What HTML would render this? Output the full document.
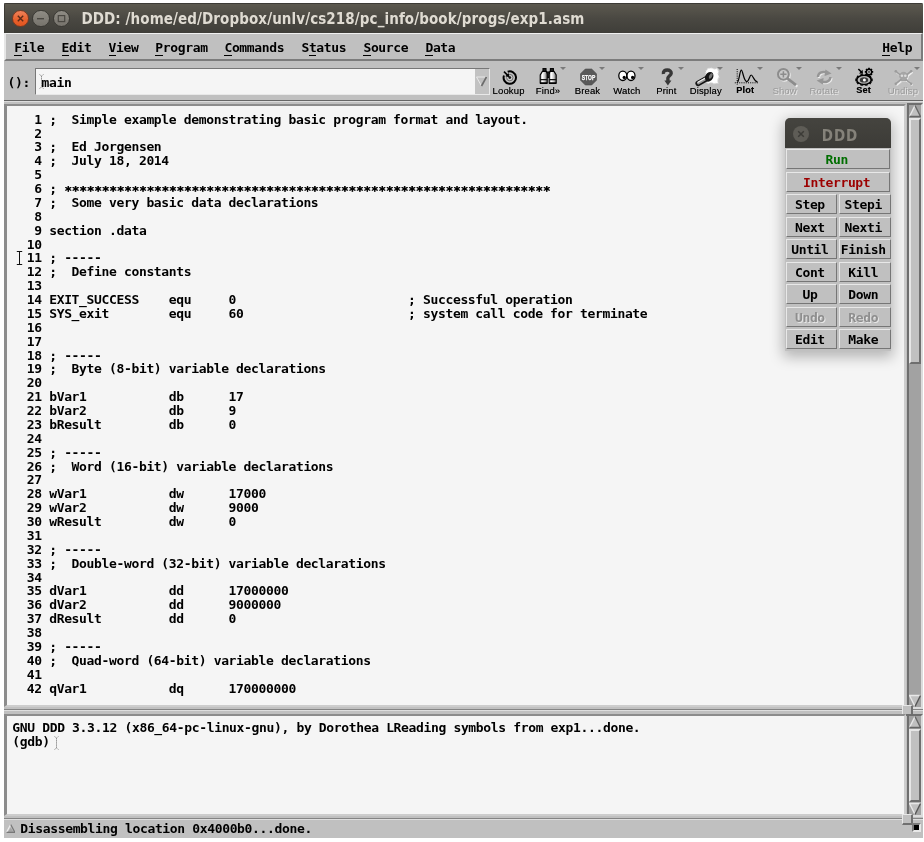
<!DOCTYPE html>
<html>
<head>
<meta charset="utf-8">
<title>DDD: /home/ed/Dropbox/unlv/cs218/pc_info/book/progs/exp1.asm</title>
<style>
html,body{margin:0;padding:0;background:#fff;}
body{width:924px;height:842px;position:relative;overflow:hidden;}
*{box-sizing:border-box;}
.abs{position:absolute;}
.mono{font-family:"DejaVu Sans Mono","Liberation Mono",monospace;font-weight:bold;font-size:13px;letter-spacing:-0.35px;color:#000;white-space:pre;line-height:13.875px;}
#win{left:4px;top:3px;width:919px;height:835px;background:#c0c0c0;will-change:transform;}
/* title bar */
#title{left:0;top:0;width:919px;height:29.6px;border-radius:1.5px 1.5px 0 0;background:linear-gradient(#5c594f 0%,#4a4842 50%,#3f3e39 100%);border-top:1px solid #3d3b36;border-left:1px solid #3d3b36;}
#title .t{left:76.4px;top:4.6px;font-family:"DejaVu Sans Condensed","Liberation Sans",sans-serif;font-weight:bold;font-size:15px;line-height:20px;color:#dfdbd2;white-space:pre;letter-spacing:0.09px;}
.wb{width:17.6px;height:17.6px;border-radius:50%;top:5.6px;border:1px solid #3a3934;}
/* menu */
#menu{left:0;top:30px;width:919px;height:28px;background:#c0c0c0;border-top:1px solid #f0f0f0;border-left:2px solid #e6e6e6;border-bottom:2px solid #7c7c7c;border-right:2px solid #7c7c7c;}
#menu span{position:absolute;top:6.5px;}
#menu u{text-decoration:none;border-bottom:1.5px solid #000;}
/* toolbar */
#tool{left:0;top:58px;width:919px;height:40px;background:#c0c0c0;border-bottom:1px solid #666;}
#arg{left:31px;top:7px;width:454.6px;height:27px;background:#f5f5f5;border-top:1px solid #777;border-left:1px solid #777;border-bottom:1px solid #e8e8e8;border-right:1px solid #e8e8e8;}
.tb{position:absolute;top:0;width:40px;height:40px;text-align:center;}
.tb .lb{position:absolute;left:-10px;width:60px;top:23.5px;text-align:center;font-family:"Liberation Sans","DejaVu Sans",sans-serif;font-size:9.5px;line-height:11px;color:#000;letter-spacing:0.15px;text-shadow:0 0 0.6px rgba(0,0,0,0.55);}
.tb.dis .lb{color:#9a9a9a;text-shadow:1px 1px 0 #e8e8e8;}
.tb svg{position:absolute;left:6px;top:4px;}
.tb .dd{position:absolute;right:2.5px;top:6px;width:0;height:0;border-left:3.2px solid transparent;border-right:3.2px solid transparent;border-top:3.4px solid #7a7a7a;}
/* source */
#src{left:0;top:99px;width:902px;height:610px;background:#c0c0c0;}
#srcin{left:0px;top:1.7px;width:902.4px;height:603.6px;background:#f5f5f5;border-top:2px solid #8c8c8c;border-left:3px solid #8c8c8c;border-bottom:2.3px solid #cdcdcd;border-right:2.3px solid #cdcdcd;}
#code{left:4.8px;top:7.0px;}
/* scrollbars */
.sb{background:#a2a2a2;border-top:2px solid #6e6e6e;border-left:2px solid #6e6e6e;border-bottom:2px solid #dcdcdc;border-right:2px solid #dcdcdc;}
.thumb{background:#c0c0c0;border-top:2px solid #e6e6e6;border-left:2px solid #e6e6e6;border-bottom:2px solid #6e6e6e;border-right:2px solid #6e6e6e;}
/* command tool */
#ct{left:781px;top:115px;width:106.4px;height:232.6px;box-shadow:0 4px 14px 2px rgba(0,0,0,0.27);border-radius:5px 5px 0 0;background:#c0c0c0;}
#ctt{left:0;top:0;width:106px;height:30px;border-radius:5px 5px 0 0;background:linear-gradient(#45443f,#3c3b37);}
#ctt .t{left:36.8px;top:7.5px;font-family:"DejaVu Sans Condensed","Liberation Sans",sans-serif;font-weight:bold;font-size:15px;line-height:20px;color:#85827a;letter-spacing:0.9px;}
.btn{position:absolute;height:20.4px;background:#c0c0c0;border-top:1.5px solid #e8e8e8;border-left:1.5px solid #e8e8e8;border-bottom:1.5px solid #767676;border-right:1.5px solid #767676;text-align:center;}
.btn span{display:block;line-height:19.2px;padding-right:3px;}
.btn.dis span{color:#8e8e8e;text-shadow:1px 1px 0 #e6e6e6;}
/* console */
#con{left:0;top:711.2px;width:902.4px;height:102.1px;background:#f5f5f5;border-top:2.2px solid #8c8c8c;border-left:3px solid #8c8c8c;border-bottom:2px solid #cdcdcd;border-right:2px solid #cdcdcd;}
#context{left:5.3px;top:4.6px;}
.sash{width:11px;height:11px;background:#c0c0c0;border-top:1px solid #e8e8e8;border-left:1px solid #e8e8e8;border-bottom:2px solid #707070;border-right:2px solid #707070;}
.sep{height:2px;border-top:1px solid #858585;border-bottom:1px solid #dedede;}
</style>
</head>
<body>
<div id="win" class="abs">

<!-- TITLE BAR -->
<div id="title" class="abs">
  <div class="abs wb" style="left:6.8px;background:linear-gradient(#f0825a,#e8602c 60%,#e2551f);border-color:#7a3a22;">
    <svg class="abs" style="left:0.3px;top:0.3px" width="15" height="15" viewBox="0 0 15 15"><path d="M4.8 4.8 L10.2 10.2 M10.2 4.8 L4.8 10.2" stroke="#5a2a18" stroke-width="1.4" fill="none"/></svg>
  </div>
  <div class="abs wb" style="left:27.2px;background:linear-gradient(#8f8c84,#76736c);">
    <svg class="abs" style="left:0.3px;top:0.3px" width="15" height="15" viewBox="0 0 15 15"><path d="M4 7.7 L11 7.7" stroke="#4a4842" stroke-width="1.4" fill="none"/></svg>
  </div>
  <div class="abs wb" style="left:47.6px;background:linear-gradient(#8f8c84,#76736c);">
    <svg class="abs" style="left:0.3px;top:0.3px" width="15" height="15" viewBox="0 0 15 15"><rect x="4.3" y="4.6" width="6.4" height="6" stroke="#4a4842" stroke-width="1.2" fill="none"/></svg>
  </div>
  <div class="abs t">DDD: /home/ed/Dropbox/unlv/cs218/pc_info/book/progs/exp1.asm</div>
</div>

<!-- MENU BAR -->
<div id="menu" class="abs mono">
  <span style="left:8.3px"><u>F</u>ile</span>
  <span style="left:55.6px"><u>E</u>dit</span>
  <span style="left:102.6px"><u>V</u>iew</span>
  <span style="left:149.3px"><u>P</u>rogram</span>
  <span style="left:218.4px"><u>C</u>ommands</span>
  <span style="left:295.4px">S<u>t</u>atus</span>
  <span style="left:357.4px"><u>S</u>ource</span>
  <span style="left:419.4px"><u>D</u>ata</span>
  <span style="left:876.2px"><u>H</u>elp</span>
</div>

<!-- TOOLBAR -->
<div id="tool" class="abs">
  <div class="abs mono" style="left:3.6px;top:15.2px;">():</div>
  <div id="arg" class="abs">
    <div class="abs mono" style="left:5.5px;top:6.5px;">main</div>
    <svg class="abs" style="left:3px;top:5px" width="6" height="15" viewBox="0 0 6 15"><path d="M0.5 0.5 L2.5 2 L4.5 0.5 M2.5 2 L2.5 13 M0.5 14.5 L2.5 13 L4.5 14.5" stroke="#8a8a8a" stroke-width="1" fill="none" stroke-dasharray="1.5 0.6"/></svg>
    <div class="abs" style="left:439.4px;top:0;width:13.2px;height:25px;background:#c2c2c2;">
      <svg class="abs" style="left:1px;top:7px" width="11" height="11" viewBox="0 0 11 11"><path d="M0.5 1 L10.5 1 L5.5 10 Z" fill="#c0c0c0" stroke="#e8e8e8" stroke-width="1"/><path d="M10.5 1 L5.5 10" stroke="#6a6a6a" stroke-width="1.7"/></svg>
    </div>
  </div>
  <div id="tbs">
  <div class="tb" style="left:484.6px"><!--I:Lookup--><svg width="28" height="24" viewBox="0 0 28 24" style="overflow:visible"><path d="M12.68 6.77 A6.2 6.2 0 1 1 8.97 10.48" stroke="#000" stroke-width="2" fill="none"/><circle cx="14.8" cy="12.6" r="3.2" fill="#d0d0d0" stroke="#6a6a6a" stroke-width="1"/><circle cx="14.8" cy="12.6" r="1.4" fill="#1a1a1a"/><path d="M9 6.6 L13 10.6" stroke="#000" stroke-width="1.6"/><path d="M14.6 12.2 L10.4 11.2 L13.6 8 Z" fill="#000"/></svg><!--/I:Lookup--><div class="lb">Lookup</div></div>
  <div class="tb" style="left:524.0px"><!--I:Find»--><svg width="28" height="24" viewBox="0 0 28 24" style="overflow:visible"><defs><linearGradient id="bg1" x1="0" x2="1"><stop offset="0" stop-color="#9a9a9a"/><stop offset="0.3" stop-color="#fff"/><stop offset="0.6" stop-color="#d0d0d0"/><stop offset="1" stop-color="#666"/></linearGradient></defs><g stroke="#000" stroke-width="1.1"><rect x="9" y="3.6" width="3" height="3" fill="#222"/><rect x="16.4" y="3.6" width="3" height="3" fill="#222"/><rect x="12.4" y="7" width="3.6" height="5.4" fill="#222"/><path d="M8.4 6.4 L12.4 6.4 L13.2 9 L13.2 18 L6.2 18 L6.2 10 Z" fill="url(#bg1)"/><path d="M16 6.4 L20 6.4 L22.2 10 L22.2 18 L15.2 18 L15.2 9 Z" fill="url(#bg1)"/></g><path d="M6.2 14.6 h7 M15.2 14.6 h7" stroke="#111" stroke-width="1.4"/><path d="M6 18.3 h7.4 M15 18.3 h7.4" stroke="#000" stroke-width="1.5"/></svg><!--/I:Find»--><i class="dd"></i><div class="lb">Find»</div></div>
  <div class="tb" style="left:563.5px"><!--I:Break--><svg width="28" height="24" viewBox="0 0 28 24" style="overflow:visible"><path d="M11.3 4 L17.7 4 L22.5 8.8 L22.5 15.2 L17.7 20 L11.3 20 L6.5 15.2 L6.5 8.8 Z" fill="#595959" stroke="#4c4c4c" stroke-width="0.6"/><text x="14.5" y="14.5" text-anchor="middle" font-family="Liberation Sans, DejaVu Sans, sans-serif" font-weight="bold" font-size="6.8" fill="#fff" stroke="#fff" stroke-width="0.25" textLength="13.4" lengthAdjust="spacingAndGlyphs">STOP</text></svg><!--/I:Break--><i class="dd"></i><div class="lb">Break</div></div>
  <div class="tb" style="left:602.9px"><!--I:Watch--><svg width="28" height="24" viewBox="0 0 28 24" style="overflow:visible"><ellipse cx="9.8" cy="10.8" rx="4" ry="4.7" fill="#fff" stroke="#000" stroke-width="1.3"/><ellipse cx="18" cy="10.8" rx="4" ry="4.7" fill="#fff" stroke="#000" stroke-width="1.3"/><circle cx="11.2" cy="12.4" r="1.6" fill="#000"/><circle cx="19.6" cy="12.4" r="1.6" fill="#000"/></svg><!--/I:Watch--><i class="dd"></i><div class="lb">Watch</div></div>
  <div class="tb" style="left:642.3px"><!--I:Print--><svg width="28" height="24" viewBox="0 0 28 24" style="overflow:visible"><path d="M11.4 9 C11 6 13 5 15.2 5 C17.8 5 19.4 6.4 19.2 8.4 C19 10.4 16.2 11 15.9 13 L15.9 16" stroke="#383838" stroke-width="3.4" fill="none"/><path d="M12.4 15.6 L19.4 15.6 L15.9 20.6 Z" fill="#383838"/></svg><!--/I:Print--><i class="dd"></i><div class="lb">Print</div></div>
  <div class="tb" style="left:681.8px"><!--I:Display--><svg width="28" height="24" viewBox="0 0 28 24" style="overflow:visible"><path d="M14 6 L16 3.4 L20 3 L22 4.2 L25 3.4 L26.6 6 L26 9 L27 12 L25.6 15 L26 18 L22 18.6 L19 17.4 L16 18.4 L13.4 15 Z" fill="#fff"/><path d="M14 6 L16 3.4 L20 3 L22 4.2 L25 3.4 L26.6 6 L26 9 L27 12 L25.6 15 L26 18 L22 18.6 L19 17.4 L16 18.4 L13.4 15 Z" fill="none" stroke="#e0e0e0" stroke-width="1.2" stroke-dasharray="1 1"/><path d="M6.2 18.4 L14.6 13.6" stroke="#151515" stroke-width="5.6" stroke-linecap="round"/><path d="M6.4 18 L14 13.6" stroke="#9a9a9a" stroke-width="2.8" stroke-linecap="round"/><path d="M6 17.2 L13.4 12.9" stroke="#f0f0f0" stroke-width="1.2" stroke-linecap="round"/><ellipse cx="17.2" cy="11.8" rx="3.9" ry="5.2" transform="rotate(30 17.2 11.8)" fill="#151515"/><ellipse cx="18.7" cy="10.9" rx="1.5" ry="3" transform="rotate(30 18.7 10.9)" fill="#777"/></svg><!--/I:Display--><i class="dd"></i><div class="lb">Display</div></div>
  <div class="tb" style="left:721.2px"><!--I:Plot--><svg width="28" height="24" viewBox="0 0 28 24" style="overflow:visible"><path d="M6.2 4 L6.2 20" stroke="#000" stroke-width="1" stroke-dasharray="1 1.2"/><path d="M3.8 17.8 L27 17.8" stroke="#000" stroke-width="1" stroke-dasharray="1 1.2"/><path d="M6.6 17 C8.4 15 8.8 5.2 10.3 5.2 C12 5.2 12.6 17 16 16.6 C18 16.4 18.6 10 20.2 10 C22 10 22.8 16.4 26.6 17" stroke="#000" stroke-width="1.2" fill="none"/></svg><!--/I:Plot--><i class="dd"></i><div class="lb" style="font-weight:bold;font-size:9.2px;top:24.3px">Plot</div></div>
  <div class="tb dis" style="left:760.6px"><!--I:Show--><svg width="28" height="24" viewBox="0 0 28 24" style="overflow:visible"><g transform="translate(1,1)" stroke="#ececec" fill="none"><circle cx="12.4" cy="9.3" r="5.6" stroke-width="1.6"/><path d="M16.6 13.6 L25.4 20.6" stroke-width="2.4"/></g><circle cx="12.4" cy="9.3" r="5.4" stroke="#8c8c8c" stroke-width="2" fill="#cacaca"/><path d="M12.4 6.2 L12.4 12.4 M9.3 9.3 L15.5 9.3" stroke="#8c8c8c" stroke-width="1.5"/><path d="M16.6 13.6 L25 20.2" stroke="#8c8c8c" stroke-width="2.8"/></svg><!--/I:Show--><i class="dd"></i><div class="lb">Show</div></div>
  <div class="tb dis" style="left:800.0px"><!--I:Rotate--><svg width="28" height="24" viewBox="0 0 28 24" style="overflow:visible"><g transform="translate(1,1)" fill="none" stroke="#ececec" stroke-width="2.2"><path d="M8 12 C8 8 12 6 16.5 7.4"/><path d="M20.4 12 C20.4 16 16 18 11.6 16.6"/></g><g fill="none" stroke="#969696" stroke-width="2.4"><path d="M8 12 C8 8 12 6 16.5 7.4"/><path d="M20.4 12 C20.4 16 16 18 11.6 16.6"/></g><path d="M15.4 4.4 L21.6 8.6 L14.6 11 Z" fill="#969696"/><path d="M12.8 19.6 L6.6 15.4 L13.6 13 Z" fill="#969696"/></svg><!--/I:Rotate--><i class="dd"></i><div class="lb">Rotate</div></div>
  <div class="tb" style="left:839.5px"><!--I:Set--><svg width="28" height="24" viewBox="0 0 28 24" style="overflow:visible"><path d="M20.70 14.90 L22.70 14.90 M19.42 17.31 L21.04 18.43 M16.07 18.80 L16.69 20.61 M11.93 18.80 L11.31 20.61 M8.58 17.31 L6.96 18.43 M7.30 14.90 L5.30 14.90 M8.58 12.49 L6.96 11.37 M11.93 11.00 L11.31 9.19 M16.07 11.00 L16.69 9.19 M19.42 12.49 L21.04 11.37 " stroke="#000" stroke-width="2.6"/><ellipse cx="14" cy="14.9" rx="7.2" ry="4.6" fill="#b8b8b8" stroke="#000" stroke-width="1.6"/><ellipse cx="14" cy="14.9" rx="4.2" ry="2.7" fill="#3a3a3a"/><circle cx="14.4" cy="14.9" r="1.5" fill="#fff"/><path d="M21.20 6.90 L23.20 6.90 M20.56 8.46 L21.97 9.80 M19.00 9.10 L19.00 11.00 M17.44 8.46 L16.03 9.80 M16.80 6.90 L14.80 6.90 M17.44 5.34 L16.03 4.00 M19.00 4.70 L19.00 2.80 M20.56 5.34 L21.97 4.00 " stroke="#000" stroke-width="1.7"/><circle cx="19" cy="6.9" r="2.7" fill="#c0c0c0" stroke="#000" stroke-width="1.4"/><circle cx="19" cy="6.9" r="0.9" fill="#333"/><path d="M8.4 4 L11.6 7.2" stroke="#000" stroke-width="1.6"/><path d="M13 8.8 L9 8.4 L12.6 4.8 Z" fill="#000"/></svg><!--/I:Set--><div class="lb" style="font-weight:bold;font-size:9.2px;top:24.3px">Set</div></div>
  <div class="tb dis" style="left:878.9px"><!--I:Undisp--><svg width="28" height="24" viewBox="0 0 28 24" style="overflow:visible"><g transform="translate(1,1)" stroke="#ececec" stroke-width="2" stroke-linecap="round" fill="#ececec"><path d="M7 6.4 L22 18.6 M22 6.4 L7 18.6"/><path d="M10.6 11 C10.6 6 18.6 6 18.6 11 C18.6 13 17.4 13.4 17 14 L17 16 L12.2 16 L12.2 14 C11.8 13.4 10.6 13 10.6 11 Z" stroke="none"/></g><g stroke="#9c9c9c" stroke-width="1.8" stroke-linecap="round"><path d="M7 6.4 L22 18.6 M22 6.4 L7 18.6"/></g><circle cx="6.8" cy="6.2" r="1.3" fill="#9c9c9c"/><circle cx="22.2" cy="6.2" r="1.3" fill="#9c9c9c"/><circle cx="6.8" cy="18.8" r="1.3" fill="#9c9c9c"/><circle cx="22.2" cy="18.8" r="1.3" fill="#9c9c9c"/><path d="M10.6 11 C10.6 6 18.6 6 18.6 11 C18.6 13 17.4 13.4 17 14 L17 16 L12.2 16 L12.2 14 C11.8 13.4 10.6 13 10.6 11 Z" fill="#a6a6a6" stroke="#9a9a9a" stroke-width="0.6"/><circle cx="12.9" cy="10.8" r="1.3" fill="#dcdcdc"/><circle cx="16.3" cy="10.8" r="1.3" fill="#dcdcdc"/></svg><!--/I:Undisp--><i class="dd"></i><div class="lb">Undisp</div></div>
  </div>
</div>
<div class="abs" style="left:0;top:98px;width:919px;height:1px;background:#dcdcdc"></div>

<!-- SOURCE WINDOW -->
<div id="src" class="abs">
  <div id="srcin" class="abs">
<div id="code" class="abs mono">   1 ;  Simple example demonstrating basic program format and layout.
   2 
   3 ;  Ed Jorgensen
   4 ;  July 18, 2014
   5 
   6 ; <span style="position:relative;top:2.3px;text-shadow:0.4px 0 0 #000">*****************************************************************</span>
   7 ;  Some very basic data declarations
   8 
   9 section .data
  10 
  11 ; -----
  12 ;  Define constants
  13 
  14 EXIT_SUCCESS    equ     0                       ; Successful operation
  15 SYS_exit        equ     60                      ; system call code for terminate
  16 
  17 
  18 ; -----
  19 ;  Byte (8-bit) variable declarations
  20 
  21 bVar1           db      17
  22 bVar2           db      9
  23 bResult         db      0
  24 
  25 ; -----
  26 ;  Word (16-bit) variable declarations
  27 
  28 wVar1           dw      17000
  29 wVar2           dw      9000
  30 wResult         dw      0
  31 
  32 ; -----
  33 ;  Double-word (32-bit) variable declarations
  34 
  35 dVar1           dd      17000000
  36 dVar2           dd      9000000
  37 dResult         dd      0
  38 
  39 ; -----
  40 ;  Quad-word (64-bit) variable declarations
  41 
  42 qVar1           dq      170000000</div>
  </div>
</div>

<svg class="abs" style="left:12px;top:248px" width="7" height="14" viewBox="0 0 7 14"><path d="M0.8 0.5 L6.2 0.5 M3.5 0.5 L3.5 13.5 M0.8 13.5 L6.2 13.5" stroke="#111" stroke-width="1" fill="none"/></svg>

<!-- SOURCE SCROLLBAR -->
<div class="abs sb" style="left:903px;top:100px;width:16px;height:606px;">
  <svg class="abs" style="left:0;top:0" width="12" height="13" viewBox="0 0 12 13"><path d="M6 0.5 L11.5 11.5 L0.5 11.5 Z" fill="#c0c0c0"/><path d="M6 0.5 L0.5 11.5" stroke="#e8e8e8" stroke-width="1.4"/><path d="M6 0.5 L11.5 11.5 L0.5 11.5" stroke="#666" stroke-width="1.4" fill="none"/></svg>
  <div class="abs thumb" style="left:0;top:13px;width:12px;height:246px;"></div>
  <svg class="abs" style="left:0;top:589px" width="12" height="13" viewBox="0 0 12 13"><path d="M0.5 1.5 L11.5 1.5 L6 12.5 Z" fill="#c0c0c0"/><path d="M11.5 1.5 L0.5 1.5 L6 12.5" stroke="#e8e8e8" stroke-width="1.4" fill="none"/><path d="M11.5 1.5 L6 12.5" stroke="#555" stroke-width="1.4"/></svg>
</div>

<!-- COMMAND TOOL -->
<div id="ct" class="abs">
  <div id="ctt" class="abs">
    <div class="abs" style="left:8px;top:8px;width:16px;height:16px;border-radius:50%;background:#5e5c56;">
      <svg class="abs" style="left:0;top:0" width="16" height="16" viewBox="0 0 16 16"><path d="M5.2 5.2 L10.8 10.8 M10.8 5.2 L5.2 10.8" stroke="#3c3b37" stroke-width="1.5" fill="none"/></svg>
    </div>
    <div class="abs t">DDD</div>
  </div>
  <div id="btns" class="mono">
    <div class="btn" style="left:0.9px;top:31.1px;width:104.6px;"><span style="color:#006e00">Run</span></div>
    <div class="btn" style="left:0.9px;top:53.6px;width:104.6px;"><span style="color:#9c0000">Interrupt</span></div>
    <div class="btn" style="left:0.9px;top:76.1px;width:51.0px;"><span>Step</span></div>
    <div class="btn" style="left:54.0px;top:76.1px;width:51.5px;"><span>Stepi</span></div>
    <div class="btn" style="left:0.9px;top:98.6px;width:51.0px;"><span>Next</span></div>
    <div class="btn" style="left:54.0px;top:98.6px;width:51.5px;"><span>Nexti</span></div>
    <div class="btn" style="left:0.9px;top:121.1px;width:51.0px;"><span>Until</span></div>
    <div class="btn" style="left:54.0px;top:121.1px;width:51.5px;"><span>Finish</span></div>
    <div class="btn" style="left:0.9px;top:143.6px;width:51.0px;"><span>Cont</span></div>
    <div class="btn" style="left:54.0px;top:143.6px;width:51.5px;"><span>Kill</span></div>
    <div class="btn" style="left:0.9px;top:166.1px;width:51.0px;"><span>Up</span></div>
    <div class="btn" style="left:54.0px;top:166.1px;width:51.5px;"><span>Down</span></div>
    <div class="btn dis" style="left:0.9px;top:188.6px;width:51.0px;"><span>Undo</span></div>
    <div class="btn dis" style="left:54.0px;top:188.6px;width:51.5px;"><span>Redo</span></div>
    <div class="btn" style="left:0.9px;top:211.1px;width:51.0px;"><span>Edit</span></div>
    <div class="btn" style="left:54.0px;top:211.1px;width:51.5px;"><span>Make</span></div>
  </div>
</div>

<!-- SEPARATOR + SASH -->
<div class="abs sep" style="left:0;top:706px;width:919px;"></div>
<div class="abs sash" style="left:898px;top:702px;"></div>

<!-- CONSOLE -->
<div id="con" class="abs">
<div id="context" class="abs mono">GNU DDD 3.3.12 (x86_64-pc-linux-gnu), by Dorothea LReading symbols from exp1...done.
(gdb) </div>
  <svg class="abs" style="left:47px;top:19.5px" width="6" height="15" viewBox="0 0 6 15"><path d="M0.5 0.5 L2.5 2 L4.5 0.5 M2.5 2 L2.5 12 M0.5 13.5 L2.5 12 L4.5 13.5" stroke="#909090" stroke-width="1" fill="none" stroke-dasharray="1.5 0.6"/></svg>
</div>

<!-- CONSOLE SCROLLBAR -->
<div class="abs sb" style="left:903px;top:711px;width:16px;height:103px;">
  <svg class="abs" style="left:0;top:0" width="12" height="13" viewBox="0 0 12 13"><path d="M6 0.5 L11.5 11.5 L0.5 11.5 Z" fill="#c0c0c0"/><path d="M6 0.5 L0.5 11.5" stroke="#e8e8e8" stroke-width="1.4"/><path d="M6 0.5 L11.5 11.5 L0.5 11.5" stroke="#666" stroke-width="1.4" fill="none"/></svg>
  <div class="abs thumb" style="left:0;top:13px;width:12px;height:73px;"></div>
  <svg class="abs" style="left:0;top:86px" width="12" height="13" viewBox="0 0 12 13"><path d="M0.5 1.5 L11.5 1.5 L6 12.5 Z" fill="#c0c0c0"/><path d="M11.5 1.5 L0.5 1.5 L6 12.5" stroke="#e8e8e8" stroke-width="1.4" fill="none"/><path d="M11.5 1.5 L6 12.5" stroke="#555" stroke-width="1.4"/></svg>
</div>

<!-- STATUS -->
<div class="abs sep" style="left:0;top:815px;width:919px;"></div>
<div class="abs sash" style="left:898px;top:811px;"></div>
<div class="abs mono" style="left:16.3px;top:819px;">Disassembling location 0x4000b0...done.</div>
<svg class="abs" style="left:1.5px;top:821px" width="9.4" height="9.4" viewBox="0 0 10 10"><path d="M5 0.5 L9.5 9 L0.5 9 Z" fill="#c0c0c0"/><path d="M5 4 L8.6 9 L1.6 9 Z" fill="#a4a4a4"/><path d="M5 0.5 L0.5 9" stroke="#ececec" stroke-width="1.3"/><path d="M5 0.5 L9.5 9 L0.5 9" stroke="#777" stroke-width="1.3" fill="none"/></svg>
<div class="abs" style="left:908px;top:820px;width:9px;height:9px;background:#000;border-top:2px solid #7a7a7a;border-left:2px solid #7a7a7a;border-right:2px solid #e8e8e8;border-bottom:2px solid #e8e8e8;"></div>

</div>
</body>
</html>
